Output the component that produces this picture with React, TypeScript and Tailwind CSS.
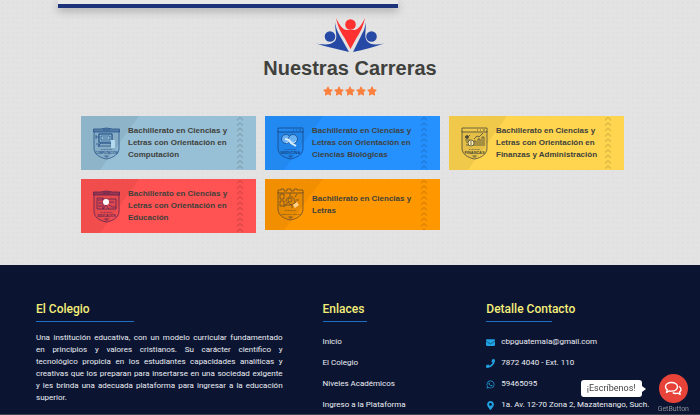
import type { ReactNode } from "react";
import { FaEnvelope, FaPhone, FaWhatsapp, FaMapMarkerAlt, FaStar } from "react-icons/fa";

type Emblem = "computer" | "medicine" | "finance" | "education" | "letters";

interface Career {
  title: string;
  emblem: Emblem;
  caption: string;
  tint: string;
  ink: string;
}

const careers: Career[] = [
  { title: "Bachillerato en Ciencias y Letras con Orientación en Computación", emblem: "computer", caption: "COMPUTACIÓN", tint: "bg-[#97bfd5]", ink: "text-[#28548a]" },
  { title: "Bachillerato en Ciencias y Letras con Orientación en Ciencias Biológicas", emblem: "medicine", caption: "MEDICINA", tint: "bg-[#2491ff]", ink: "text-[#174887]" },
  { title: "Bachillerato en Ciencias y Letras con Orientación en Finanzas y Administración", emblem: "finance", caption: "FINANZAS", tint: "bg-[#ffd54f]", ink: "text-[#4c4a38]" },
  { title: "Bachillerato en Ciencias y Letras con Orientación en Educación", emblem: "education", caption: "EDUCACIÓN", tint: "bg-[#ff5252]", ink: "text-[#5b2452]" },
  { title: "Bachillerato en Ciencias y Letras", emblem: "letters", caption: "CIENCIAS Y LETRAS", tint: "bg-[#ff9800]", ink: "text-[#684f2c]" },
];

const art: Record<Emblem, ReactNode> = {
  computer: (
    <>
      <rect x="6" y="7" width="13" height="9" fill="#a5d0e8" fillOpacity="0.5" />
      <path d="M6 7h13v8H6zM8 9h9v4H8zM3 10h3M3 8v4M8 16h9l2 3H5zM3 17h3v3" />
      <path d="M10 11h5" />
      <path d="M18 13h4v8h-4z" fill="#b5d9ec" stroke="none" />
    </>
  ),
  medicine: (
    <>
      <circle cx="9" cy="12" r="4.5" fill="#69b1f5" />
      <circle cx="16" cy="12" r="4.5" fill="#69b1f5" />
      <path d="M8 12l4 1 2 3 5 3" stroke="#d8edff" strokeWidth="2" />
      <path d="M9 16l4-2 4 2 2-2" stroke="#d8edff" />
    </>
  ),
  finance: (
    <>
      <path d="M4 10h3l2-2M4 13h5M5 15h4M5 18h4M13 19v-5h2v5M17 19v-7h2v7M21 19v-9h2v9M13 12l3-3 2 1 4-4" />
      <circle cx="6" cy="10" r="1.5" fill="currentColor" />
      <circle cx="10" cy="16" r="3" fill="#fff0b0" />
      <path d="M10 14v4" />
    </>
  ),
  education: (
    <>
      <path d="M4 8h6v11H4zM5 10h4M5 13h4M5 16h4M9 9h14v10H10" fill="#d34858" fillOpacity="0.5" />
      <circle cx="13" cy="12" r="3" fill="#fff" stroke="none" />
      <path d="M16 12h5M16 15l3 2h4M10 19l3-4 3 4" />
    </>
  ),
  letters: (
    <>
      <path d="M3 6h4v5H3zM3 13h4v5H3zM9 14c0-7 9-7 9 0M7 19l4-5 3 3 5-3M13 5v3M20 6l-2 3M22 12h-3M8 17h7v3" />
      <circle cx="13" cy="12" r="2" />
      <path d="M16 17l4-3 2 3-4 3z" fill="#ffd18c" stroke="none" />
    </>
  ),
};

function CareerEmblem({ kind, caption, ink }: { kind: Emblem; caption: string; ink: string }) {
  return (
    <svg viewBox="0 0 27 33" className={`h-[33px] w-[27px] shrink-0 ${ink}`} fill="none" stroke="currentColor" strokeWidth="0.8" aria-hidden="true">
      <path d="M1 4v17c0 6 5 9.500 12.500 11 7.500-1.500 12.500-5 12.500-11V4" fill="currentColor" fillOpacity="0.08" />
      {kind === "finance" || kind === "medicine" ? (
        <path d="M1 1h25v4H1zM16 3h1M19 3h1M22 3h2" />
      ) : kind === "letters" ? (
        <path d="M1 5V2h3V1h3v2h3V1h4v2h3V1h3v1h6v3z" />
      ) : (
        <path d="M.5 2h7l6-1 6 1h7v3H.5zM10 3h7" fill="currentColor" fillOpacity="0.55" />
      )}
      {art[kind]}
      <path d="M8 22.500h11" strokeWidth="0.600" strokeDasharray="1 0.500" />
      <text x="13.500" y="26.500" textAnchor="middle" fontSize={kind === "finance" || kind === "medicine" ? 4 : kind === "letters" ? 2 : 3} fontWeight="700" fill="currentColor" stroke="none" fontFamily="Liberation Sans, sans-serif">
        {caption}
      </text>
      <path d="M11.500 29h4M12.500 30h2" />
    </svg>
  );
}

function CareerCard({ career }: { career: Career }) {
  const patternId = `chevrons-${career.emblem}`;
  return (
    <a href={`#${career.emblem}`} className={`relative flex items-center px-3 py-[9px] ${career.tint}`}>
      <svg viewBox="0 0 58 54" preserveAspectRatio="none" className="absolute left-0 top-0 h-full w-[58px]" aria-hidden="true">
        <path d="M0 0h58L19 54H0z" fill="#000" fillOpacity="0.055" />
      </svg>
      <svg className="absolute right-3 top-0 h-full w-2 text-black/15" aria-hidden="true">
        <defs>
          <pattern id={patternId} width="8" height="5.400" patternUnits="userSpaceOnUse">
            <path d="M1 4L4 1.500 7 4" fill="none" stroke="currentColor" strokeWidth="1.200" />
          </pattern>
        </defs>
        <rect width="100%" height="100%" fill={`url(#${patternId})`} />
      </svg>
      <div className="relative flex items-center gap-2">
        <CareerEmblem kind={career.emblem} caption={career.caption} ink={career.ink} />
        <h3 className="w-[106px] text-[8px] font-bold leading-3 text-[#40413c]">{career.title}</h3>
      </div>
    </a>
  );
}

function SchoolLogo() {
  return (
    <svg viewBox="0 0 68 36" className="h-9 w-[68px]" role="img" aria-label="Logotipo del colegio">
      <g fill="#2549a5">
        <circle cx="14" cy="18.500" r="5.300" />
        <circle cx="55.500" cy="18.500" r="5.300" />
        <path d="M0 25.500c9 1.500 15 1.500 19-2.500 3-4 0-10 0-19 1 7 3 10 5 14l9 16C22 31 11 29 0 25.500z" />
        <path d="M68 25.500c-8 1.500-14 1.500-17-2.500-3-4-1-10-1-19-1 7-3 10-5 14l-8 16c11-2 21-5 31-8.500z" />
      </g>
      <g fill="#ff3131">
        <circle cx="34.500" cy="6.500" r="5.300" />
        <path d="M20 0c4 8 7 12 11 12h7c4 0 7-4 11-12-2 9-5 15-8 19l-6.500 12L28 19C25 15 22 9 20 0z" />
      </g>
    </svg>
  );
}

function FooterHeading({ children, rule }: { children: ReactNode; rule: string }) {
  return (
    <div className={`mb-2.5 border-b border-[#1d6fc4] pb-1 ${rule}`}>
      <h2 className="whitespace-nowrap text-[12px] font-medium leading-4 text-[#f5ee79]">{children}</h2>
    </div>
  );
}

const aboutLines = [
  "Una institución educativa, con un modelo curricular fundamentado",
  "en principios y valores cristianos. Su carácter científico y",
  "tecnológico propicia en los estudiantes capacidades analíticas y",
  "creativas que los preparan para insertarse en una sociedad exigente",
  "y les brinda una adecuada plataforma para ingresar a la educación",
  "superior.",
];

const links = ["Inicio", "El Colegio", "Niveles Académicos", "Ingreso a la Plataforma"];

const contacts = [
  { icon: FaEnvelope, text: "cbpguatemala@gmail.com", href: "mailto:cbpguatemala@gmail.com" },
  { icon: FaPhone, text: "7872 4040 - Ext. 110", href: "tel:78724040" },
  { icon: FaWhatsapp, text: "59465095", href: "https://wa.me/59465095" },
  { icon: FaMapMarkerAlt, text: "1a. Av. 12-70 Zona 2, Mazatenango, Such.", href: "#mapa" },
];

export default function App() {
  return (
    <div className="flex min-h-screen flex-col bg-[#e3e3e3] font-['Liberation_Sans',Arial,sans-serif]">
      <main className="grow bg-[radial-gradient(#dfdfdf_1px,transparent_1px)] bg-[length:5px_5px] pb-8">
        <div className="ml-[58px] h-2 w-[340px] border-b-4 border-[#1c3279] bg-[#e8e8e8] shadow-[0_3px_8px_rgba(0,0,0,0.25)]" />
        <header className="flex flex-col items-center pt-2.5">
          <SchoolLogo />
          <h1 className="text-[20px] font-bold leading-7 text-[#40413c]">Nuestras Carreras</h1>
          <div className="mt-1 flex gap-px text-[#fb7f3d]" role="img" aria-label="Cinco estrellas">
            {[1, 2, 3, 4, 5].map((n) => (
              <FaStar key={n} size={10} />
            ))}
          </div>
        </header>
        <section className="ml-[81px] mr-[76px] mt-5 grid grid-cols-3 items-start gap-[9px]" aria-label="Carreras">
          {careers.map((career) => (
            <CareerCard key={career.emblem} career={career} />
          ))}
        </section>
      </main>

      <footer className="grid grid-cols-[287fr_164fr_214fr] border-b border-[#3c4253] bg-[#0b1532] pb-px pl-9 pt-9 font-[Roboto,sans-serif] text-[8px] text-[#eceef2]">
        <section className="pr-10">
          <FooterHeading rule="w-[98px]">El Colegio</FooterHeading>
          <p className="leading-3">
            {aboutLines.map((line) => (
              <span key={line} className="block text-justify [text-align-last:justify] last:[text-align-last:left]">
                {line}{" "}
              </span>
            ))}
          </p>
        </section>
        <nav aria-label="Enlaces">
          <FooterHeading rule="w-11">Enlaces</FooterHeading>
          <ul className="flex flex-col gap-[5px] pt-0.5 leading-4">
            {links.map((link) => (
              <li key={link}>
                <a href="#inicio">{link}</a>
              </li>
            ))}
          </ul>
        </nav>
        <section>
          <FooterHeading rule="w-[66px]">Detalle Contacto</FooterHeading>
          <ul className="flex flex-col gap-[5px] pt-0.5 leading-4">
            {contacts.map(({ icon: Icon, text, href }) => (
              <li key={text}>
                <a href={href} className="flex items-center gap-1.5">
                  <Icon size={9} className="shrink-0 text-[#21a3e3]" />
                  <span className="whitespace-nowrap">{text}</span>
                </a>
              </li>
            ))}
          </ul>
        </section>
      </footer>

      <aside className="fixed bottom-0 right-[11px] flex items-center gap-4 font-[Roboto,sans-serif]">
        <div className="relative mb-3 h-[17px] rounded-[3px] bg-white px-1.5 text-[9px] leading-[17px] text-[#444]">
          ¡Escríbenos!
          <span className="absolute -right-1 top-1.5 h-0 w-0 border-y-[3px] border-l-4 border-y-transparent border-l-white" />
        </div>
        <div className="flex flex-col items-center">
          <button type="button" aria-label="Abrir chat" className="flex h-[29px] w-[29px] items-center justify-center rounded-full bg-[#e84339] text-white">
            <svg viewBox="0 0 18 15" className="h-[15px] w-[18px]" fill="none" stroke="currentColor" strokeWidth="1.400" strokeLinejoin="round" aria-hidden="true">
              <path d="M7.500 1.500c3.500 0 6 1.900 6 4.300s-2.500 4.300-6 4.300q-1.200 0-2.200-.300L2.500 11.300l.8-2.500C2 8 1.500 7 1.500 5.800c0-2.400 2.500-4.300 6-4.300z" />
              <path d="M15 5.500c1.300.7 2 1.800 2 3 0 1-.6 1.900-1.500 2.600l.7 2.200-2.500-1.200c-2 .6-3.700.3-5-.5" />
            </svg>
          </button>
          <a href="#getbutton" className="text-[7px] leading-3 text-[#8b909c]">GetButton</a>
        </div>
      </aside>
    </div>
  );
}
